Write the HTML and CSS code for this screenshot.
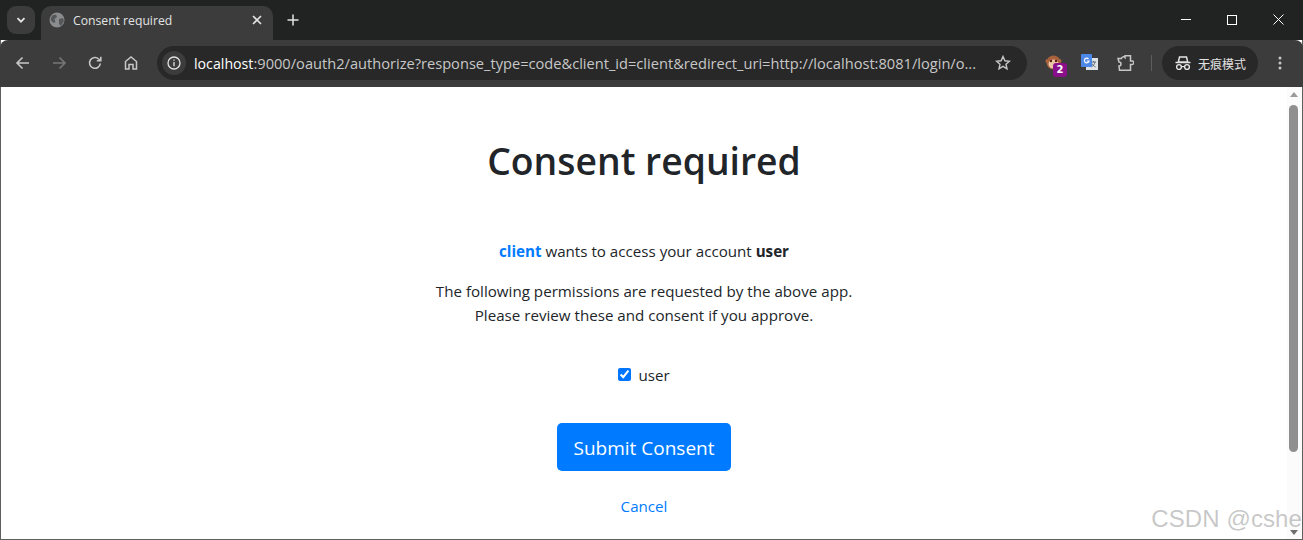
FILE: index.html
```html
<!DOCTYPE html>
<html lang="en">
<head>
<meta charset="utf-8">
<title>Consent required</title>
<link rel="stylesheet" href="styles.css">
</head>
<body>
<div class="window">
  <header class="tabstrip">
    <button class="tabsearch"><svg width="12" height="12" viewBox="0 0 12 12"><path d="M2.500 4.200 6 7.700l3.500-3.500" fill="none" stroke="#e3e3e3" stroke-width="1.800"/></svg></button>
    <div class="tab">
      <svg class="favicon" width="16" height="16" viewBox="0 0 16 16"><circle cx="8" cy="8" r="7.500" fill="#8a8c8e"/><path d="M3 3.500 7 2.500 8 5 5.500 7 6.500 10 4.500 11 1.500 8ZM10 7l4-1 1 3-3 5-2-2Z" fill="#55585a"/></svg>
      <span class="tabtitle">Consent required</span>
      <svg class="tabclose" width="10" height="10" viewBox="0 0 10 10"><path d="M1 1l8 8M9 1 1 9" stroke="#e3e3e3" stroke-width="1.600"/></svg>
    </div>
    <svg class="newtab" width="12" height="12" viewBox="0 0 12 12"><path d="M6 .5v11M.5 6h11" stroke="#e3e3e3" stroke-width="1.500"/></svg>
    <div class="winctl">
      <svg width="10" height="10" viewBox="0 0 10 10"><path d="M0 4.500h10" stroke="#fff" stroke-width="1"/></svg>
      <svg width="10" height="10" viewBox="0 0 10 10"><rect x=".5" y=".5" width="9" height="9" fill="none" stroke="#fff"/></svg>
      <svg width="11" height="11" viewBox="0 0 11 11"><path d="M.5.5l10 10M10.500 .5l-10 10" stroke="#fff"/></svg>
    </div>
  </header>
  <nav class="toolbar">
    <svg class="navbtn" width="16" height="16" viewBox="0 0 16 16"><path d="M14 8H2.500M7.500 2.500 2 8l5.500 5.500" fill="none" stroke="#c7c7c7" stroke-width="1.600"/></svg>
    <svg class="navbtn" width="16" height="16" viewBox="0 0 16 16"><path d="M2 8h11.500M8.500 2.500 14 8l-5.500 5.500" fill="none" stroke="#777" stroke-width="1.600"/></svg>
    <svg class="navbtn" width="16" height="16" viewBox="0 0 16 16"><path d="M13.300 8.500A5.400 5.400 0 1 1 11.700 4L13.500 5.500M13.800 1.800v4h-4" fill="none" stroke="#c7c7c7" stroke-width="1.600"/></svg>
    <svg class="navbtn" width="16" height="16" viewBox="0 0 16 16"><path d="M2.500 14V6.500L8 2l5.500 4.500V14H10V9.500H6V14Z" fill="none" stroke="#c7c7c7" stroke-width="1.500"/></svg>
    <div class="omnibox">
      <span class="infobtn"><svg width="14" height="14" viewBox="0 0 14 14"><circle cx="7" cy="7" r="6" fill="none" stroke="#e3e3e3" stroke-width="1.300"/><path d="M7 6v4.200M7 3.600v1.200" stroke="#e3e3e3" stroke-width="1.300"/></svg></span>
      <span class="url"><span class="host">localhost</span>:9000/oauth2/authorize?response_type=code&amp;client_id=client&amp;redirect_uri=http://localhost:8081/login/o...</span>
      <svg class="star" width="16" height="16" viewBox="0 0 16 16"><path d="M8 1.500l1.900 4.300 4.600.4-3.500 3 1 4.600L8 11.400l-4 2.400 1-4.600-3.500-3 4.600-.4Z" fill="none" stroke="#c7c7c7" stroke-width="1.400"/></svg>
    </div>
    <div class="ext monkey">
      <svg width="17" height="17" viewBox="0 0 17 17"><circle cx="2.500" cy="7" r="2" fill="#b5683f"/><circle cx="14.500" cy="7" r="2" fill="#b5683f"/><circle cx="8.500" cy="8.500" r="7" fill="#a9623c"/><ellipse cx="8.500" cy="10" rx="5" ry="4.500" fill="#edc7a4"/><circle cx="6" cy="7" r="1.200" fill="#5a1d12"/><circle cx="11" cy="7" r="1.200" fill="#5a1d12"/></svg>
      <span class="badge">2</span>
    </div>
    <div class="ext gt">
      <svg width="17" height="17" viewBox="0 0 17 17"><rect x="5" y="4" width="12" height="12" fill="#dfe3e6"/><path d="M10 8h5M12.500 7v1M14 8c-.5 2.500-2 4-3.500 5M11 9.500c.8 1.500 2 3 3.500 3.500" stroke="#5d6b75" fill="none"/><rect x="0" y="0" width="11" height="13" rx="1" fill="#4c88e8"/><path d="M7.500 5A2.300 2.300 0 1 0 8 7H5.800" fill="none" stroke="#fff" stroke-width="1.200"/></svg>
    </div>
    <svg class="puzzle" width="18" height="18" viewBox="0 0 18 18"><path d="M2 4.500h3.500A2 2 0 0 1 9 3.500h0V1.800h5.500v5.200H16a1.800 1.800 0 0 1 0 3.600h-1.500v5.600H3.500L3 12a2 2 0 0 0 0-4Z" fill="none" stroke="#c7c7c7" stroke-width="1.500"/></svg>
    <span class="sep"></span>
    <div class="incognito">
      <svg width="16" height="15" viewBox="0 0 16 15"><path d="M4.500 1h7l1.200 5H3.300ZM.5 6.500h15" fill="none" stroke="#e3e3e3" stroke-width="1.500"/><circle cx="4" cy="11" r="2.400" fill="none" stroke="#e3e3e3" stroke-width="1.400"/><circle cx="12" cy="11" r="2.400" fill="none" stroke="#e3e3e3" stroke-width="1.400"/><path d="M6.300 10.600h3.400" stroke="#e3e3e3" stroke-width="1.200"/></svg>
      <span>无痕模式</span>
    </div>
    <svg class="kebab" width="4" height="14" viewBox="0 0 4 14"><circle cx="2" cy="2" r="1.500" fill="#c7c7c7"/><circle cx="2" cy="7" r="1.500" fill="#c7c7c7"/><circle cx="2" cy="12" r="1.500" fill="#c7c7c7"/></svg>
  </nav>
  <div class="viewport">
    <main class="page">
      <h1 class="title">Consent required</h1>
      <p class="line request"><a class="client" href="#">client</a> wants to access your account <b>user</b></p>
      <p class="line perms">The following permissions are requested by the above app.<br>Please review these and consent if you approve.</p>
      <label class="scope"><input type="checkbox" checked><span>user</span></label>
      <button class="submit">Submit Consent</button>
      <a class="cancel" href="#">Cancel</a>
    </main>
    <aside class="scrollbar">
      <span class="arrow up"></span>
      <span class="thumb"></span>
      <span class="arrow down"></span>
    </aside>
    <div class="watermark">CSDN @cshe</div>
  </div>
</div>
</body>
</html>
```
FILE: styles.css
```css
* { box-sizing: border-box; }
html, body { margin: 0; height: 100%; overflow: hidden; }
body { font-family: "Open Sans", "Noto Sans CJK SC", sans-serif; background: #fff; }
.window { height: 540px; display: flex; flex-direction: column; border: solid #5f5f5f; border-width: 0 1px 1px 1px; }
.tabstrip { height: 40px; margin: 0 -1px; background: #212323; display: flex; align-items: flex-start; position: relative; padding: 6px 0 0 7px; }
.tabsearch { width: 28px; height: 28px; background: #3c3c3c; border: 0; border-radius: 9px; padding: 0; display: flex; align-items: center; justify-content: center; }
.tab { width: 232px; height: 34px; margin-left: 6px; background: #3c3c3c; border-radius: 10px 10px 0 0; display: flex; align-items: center; padding: 0 0 6px 8px; color: #e3e3e3; font-size: 12.200px; }
.tabtitle { margin-left: 8px; flex: 1; }
.tabclose { margin-right: 11px; }
.newtab { margin: 8px 0 0 14px; }
.winctl { margin-left: auto; display: flex; align-items: center; gap: 36px; padding: 8px 19px 0 0; }
.toolbar { height: 47px; margin: 0 -1px; background: #3c3c3c; border-radius: 8px 8px 0 0; display: flex; align-items: center; padding: 0 0 1px 15px; }
.navbtn { margin-right: 20px; flex: none; }
.navbtn:nth-child(4) { margin-right: 18px; }
.omnibox { width: 870px; height: 34px; background: #282828; border-radius: 17px; display: flex; align-items: center; padding: 0 16px 0 5px; flex: none; }
.infobtn { width: 24px; height: 24px; border-radius: 50%; background: #3c3c3c; display: flex; align-items: center; justify-content: center; flex: none; }
.url { margin-left: 8px; flex: 1; font-size: 14.640px; color: #c7c7c7; white-space: nowrap; overflow: hidden; }
.host { color: #fff; font-size: 14.200px; }
.star { flex: none; margin-left: 8px; }
.ext { position: relative; flex: none; height: 18px; }
.monkey { margin-left: 18px; width: 17px; }
.gt { margin-left: 19px; width: 17px; }
.badge { position: absolute; left: 8px; top: 9px; width: 14px; height: 14px; border-radius: 3px; background: #8a0f8a; color: #fff; font: 700 10px/14px "DejaVu Sans", sans-serif; text-align: center; }
.puzzle { margin-left: 18px; flex: none; }
.sep { width: 1px; height: 16px; background: #5e5e5e; margin: 0 10px 0 17px; flex: none; }
.incognito { width: 96px; height: 34px; border-radius: 17px; background: #282828; display: flex; align-items: center; padding-left: 13px; gap: 7px; color: #e3e3e3; font-size: 12px; font-family: "Noto Sans CJK SC", sans-serif; flex: none; }
.kebab { margin-left: 20px; flex: none; }
.viewport { flex: 1; display: flex; position: relative; background: #fff; overflow: hidden; min-height: 0; }
.page { flex: 1; display: flex; flex-direction: column; align-items: center; color: #212529; font-size: 15.150px; line-height: 24px; text-align: center; }
.title { margin: 44px 0 0; font-size: 37.300px; line-height: 60px; font-weight: 600; }
.line { margin: 0; }
.request { margin-top: 48px; }
.perms { margin-top: 16px; }
.client { color: #007bff; font-weight: 700; text-decoration: none; }
.scope { margin-top: 36px; display: flex; align-items: center; gap: 7px; height: 24px; }
.scope input { margin: 0 0 1px; width: 13px; height: 13px; accent-color: #0075ff; }
.submit { margin-top: 36px; width: 174px; height: 48px; border: 0; border-radius: 5px; background: #007bff; color: #fff; font: 19px "Open Sans", sans-serif; padding: 1px 0 0; }
.cancel { margin-top: 23px; color: #007bff; text-decoration: none; }
.scrollbar { width: 15px; flex: none; background: #fbfbfb; display: flex; flex-direction: column; align-items: center; padding: 5px 2px 4px 0; }
.thumb { width: 9px; height: 347px; margin-top: 8px; border-radius: 5px; background: #8f8f8f; }
.arrow { width: 0; height: 0; border-left: 4.500px solid transparent; border-right: 4.500px solid transparent; }
.up { border-bottom: 5px solid #9a9a9a; }
.down { border-top: 5px solid #6e6e6e; margin-top: auto; }
.watermark { position: absolute; right: 0; bottom: 6px; font: 24px "Liberation Sans", sans-serif; letter-spacing: .1px; color: rgba(120,120,120,.42); white-space: nowrap; }
```
